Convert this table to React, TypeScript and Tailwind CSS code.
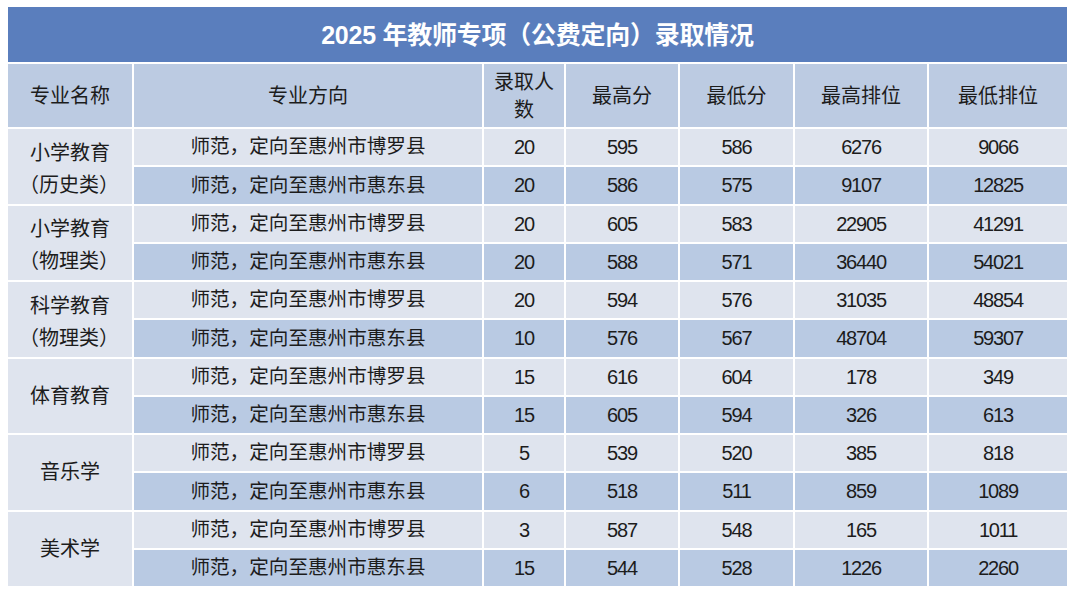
const columns = ["专业方向", "录取人数", "最高分", "最低分", "最高排位", "最低排位"];

const majors = [
    {
        name: ["小学教育", "（历史类）"],
        rows: [
            ["师范，定向至惠州市博罗县", "20", "595", "586", "6276", "9066"],
            ["师范，定向至惠州市惠东县", "20", "586", "575", "9107", "12825"],
        ],
    },
    {
        name: ["小学教育", "（物理类）"],
        rows: [
            ["师范，定向至惠州市博罗县", "20", "605", "583", "22905", "41291"],
            ["师范，定向至惠州市惠东县", "20", "588", "571", "36440", "54021"],
        ],
    },
    {
        name: ["科学教育", "（物理类）"],
        rows: [
            ["师范，定向至惠州市博罗县", "20", "594", "576", "31035", "48854"],
            ["师范，定向至惠州市惠东县", "10", "576", "567", "48704", "59307"],
        ],
    },
    {
        name: ["体育教育"],
        rows: [
            ["师范，定向至惠州市博罗县", "15", "616", "604", "178", "349"],
            ["师范，定向至惠州市惠东县", "15", "605", "594", "326", "613"],
        ],
    },
    {
        name: ["音乐学"],
        rows: [
            ["师范，定向至惠州市博罗县", "5", "539", "520", "385", "818"],
            ["师范，定向至惠州市惠东县", "6", "518", "511", "859", "1089"],
        ],
    },
    {
        name: ["美术学"],
        rows: [
            ["师范，定向至惠州市博罗县", "3", "587", "548", "165", "1011"],
            ["师范，定向至惠州市惠东县", "15", "544", "528", "1226", "2260"],
        ],
    },
];

export default function App() {
    return (
        <main className="min-h-[599px] w-[1080px] bg-white pl-[8px] pt-[7px] font-['Liberation_Sans','Noto_Sans_CJK_SC',sans-serif] text-[#1c1c1c]">
            <div className="grid w-[1059px] grid-cols-[124px_348px_80px_112px_113px_132px_138px] grid-rows-[55px_63px_repeat(12,36.25px)] gap-[2px]">
                <div className="col-span-7 flex items-center justify-center bg-[#5a7ebd] pt-[2px] text-[25px] font-bold tracking-[-0.01em] text-white">
                    2025 年教师专项（公费定向）录取情况
                </div>

                <div className="flex items-center justify-center bg-[#bccbe2] text-[20px]">
                    专业名称
                </div>
                {columns.map((col) => (
                    <div
                        key={col}
                        className="flex items-center justify-center bg-[#bccbe2] px-2 text-center text-[20px] leading-[28px]"
                    >
                        {col === "录取人数" ? (
                            <span>
                                录取人
                                <br />
                                数
                            </span>
                        ) : (
                            col
                        )}
                    </div>
                ))}

                {majors.map((major) => (
                    <>
                        <div
                            key={major.name.join("")}
                            className={`row-span-2 flex flex-col items-center justify-center bg-[#dfe4ee] text-[20px] leading-[32px] ${
                                major.name.length > 1 ? "pt-[5px]" : ""
                            }`}
                        >
                            {major.name.map((line) => (
                                <span key={line} className={line.startsWith("（") ? "-ml-[2px]" : ""}>
                                    {line}
                                </span>
                            ))}
                        </div>
                        {major.rows.map((row, i) =>
                            row.map((cell, j) => (
                                <div
                                    key={`${major.name.join("")}-${i}-${j}`}
                                    className={`flex items-center justify-center ${
                                        j === 0 ? "text-[19.6px]" : "text-[20px] tracking-[-0.06em]"
                                    } ${i === 0 ? "bg-[#dfe4ee]" : "bg-[#b9cae3]"}`}
                                >
                                    {cell}
                                </div>
                            ))
                        )}
                    </>
                ))}
            </div>
        </main>
    );
}
